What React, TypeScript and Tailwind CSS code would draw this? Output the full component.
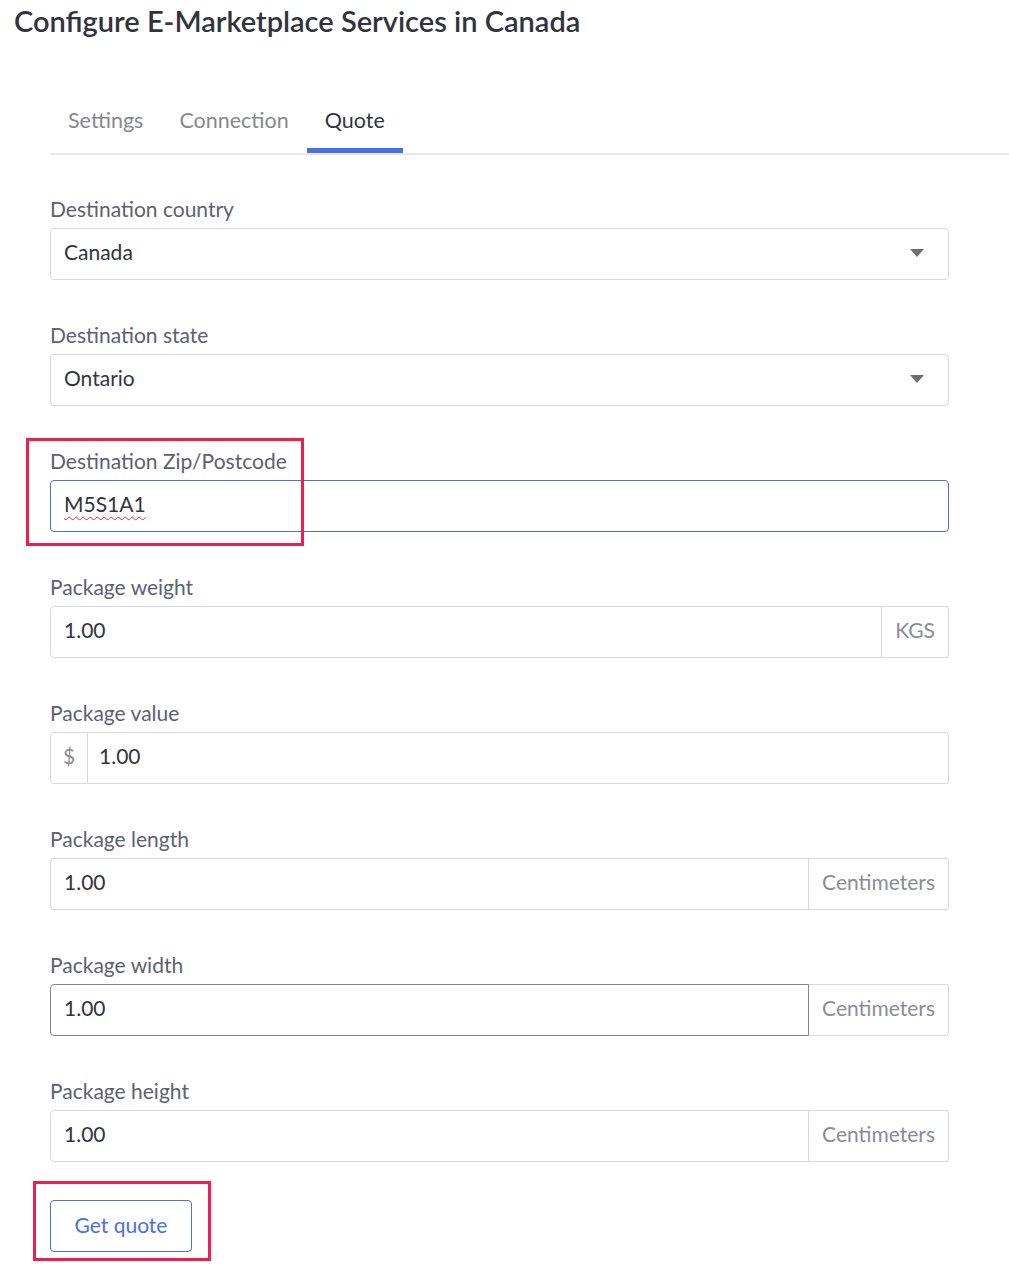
import React from "react";

function Label({ children }: { children: React.ReactNode }) {
  return (
    <div className="text-[21px] leading-[24px] text-[#5d6170] mb-[7px]">{children}</div>
  );
}

function Caret() {
  return (
    <svg width="14" height="8" viewBox="0 0 14 8" className="absolute right-[24px] top-[20px]">
      <polygon points="0,0 14,0 7,8" fill="#6e6f73" />
    </svg>
  );
}

function SelectField({ label, value }: { label: string; value: string }) {
  return (
    <div>
      <Label>{label}</Label>
      <div className="relative h-[52px] border border-[#d6d8dd] rounded-[4px] flex items-center pl-[13px] pb-[5px] text-[21px] text-[#313440]">
        {value}
        <Caret />
      </div>
    </div>
  );
}

function SuffixField({
  label,
  suffix,
  hover,
}: {
  label: string;
  suffix: string;
  hover?: boolean;
}) {
  return (
    <div>
      <Label>{label}</Label>
      <div className="flex h-[52px] text-[21px]">
        <div
          className={
            hover
              ? "flex-1 flex items-center pl-[13px] pb-[5px] border-[1.5px] border-[#858585] rounded-l-[4px] text-[#313440]"
              : "flex-1 flex items-center pl-[13px] pb-[5px] border border-[#d6d8dd] rounded-l-[4px] text-[#313440]"
          }
        >
          1.00
        </div>
        <div className="flex items-center px-[13px] pb-[5px] border border-l-0 border-[#d6d8dd] rounded-r-[4px] text-[#8a8d96]">
          {suffix}
        </div>
      </div>
    </div>
  );
}

export default function App() {
  return (
    <div className="min-h-screen bg-white font-[Lato,'Noto_Sans',sans-serif] relative">
      <h1 className="pl-[14px] pt-[5px] text-[29px] leading-[32px] font-semibold text-[#313440]">
        Configure E-Marketplace Services in Canada
      </h1>

      <div className="pl-[50px] mt-[55px]">
        <div className="flex border-b-2 border-[#e7e8ec] text-[21.5px] leading-[24px]">
          <div className="px-[18px] pt-[16px] pb-[16px] border-b-[5px] border-transparent text-[#85888f]">
            Settings
          </div>
          <div className="px-[18px] pt-[16px] pb-[16px] border-b-[5px] border-transparent text-[#85888f]">
            Connection
          </div>
          <div className="px-[18px] pt-[16px] pb-[16px] border-b-[5px] border-[#4b6fe5] text-[#313440]">
            Quote
          </div>
        </div>

        <div className="w-[899px] pt-[42px] flex flex-col gap-[43px]">
          <SelectField label="Destination country" value="Canada" />
          <SelectField label="Destination state" value="Ontario" />

          <div className="relative">
            <Label>Destination Zip/Postcode</Label>
            <div className="h-[52px] border-[1.5px] border-[#4b6fe5] rounded-[4px] flex items-center pl-[13px] pb-[5px] text-[21px] text-[#313440]">
              <span className="underline decoration-wavy decoration-[#e0303a] decoration-1 underline-offset-[4px]">
                M5S1A1
              </span>
            </div>
            <div className="absolute left-[-24px] top-[-11px] w-[278px] h-[108px] border-[3px] border-[#ee1f4f]" />
          </div>

          <SuffixField label="Package weight" suffix="KGS" />

          <div>
            <Label>Package value</Label>
            <div className="flex h-[52px] text-[21px]">
              <div className="w-[38px] flex items-center justify-center pb-[5px] border border-[#d6d8dd] rounded-l-[4px] text-[#8a8d96]">
                $
              </div>
              <div className="flex-1 flex items-center pl-[11px] pb-[5px] border border-l-0 border-[#d6d8dd] rounded-r-[4px] text-[#313440]">
                1.00
              </div>
            </div>
          </div>

          <SuffixField label="Package length" suffix="Centimeters" />
          <SuffixField label="Package width" suffix="Centimeters" hover />
          <SuffixField label="Package height" suffix="Centimeters" />
        </div>

        <div className="relative mt-[38px] w-[142px]">
          <button className="w-[142px] h-[52px] border-[1.5px] border-[#4b6fe5] rounded-[4px] text-[21px] text-[#4b6fe5] pb-[3px] bg-white">
            Get quote
          </button>
          <div className="absolute left-[-17px] top-[-19px] w-[178px] h-[80px] border-[3px] border-[#ee1f4f]" />
        </div>
      </div>
    </div>
  );
}
